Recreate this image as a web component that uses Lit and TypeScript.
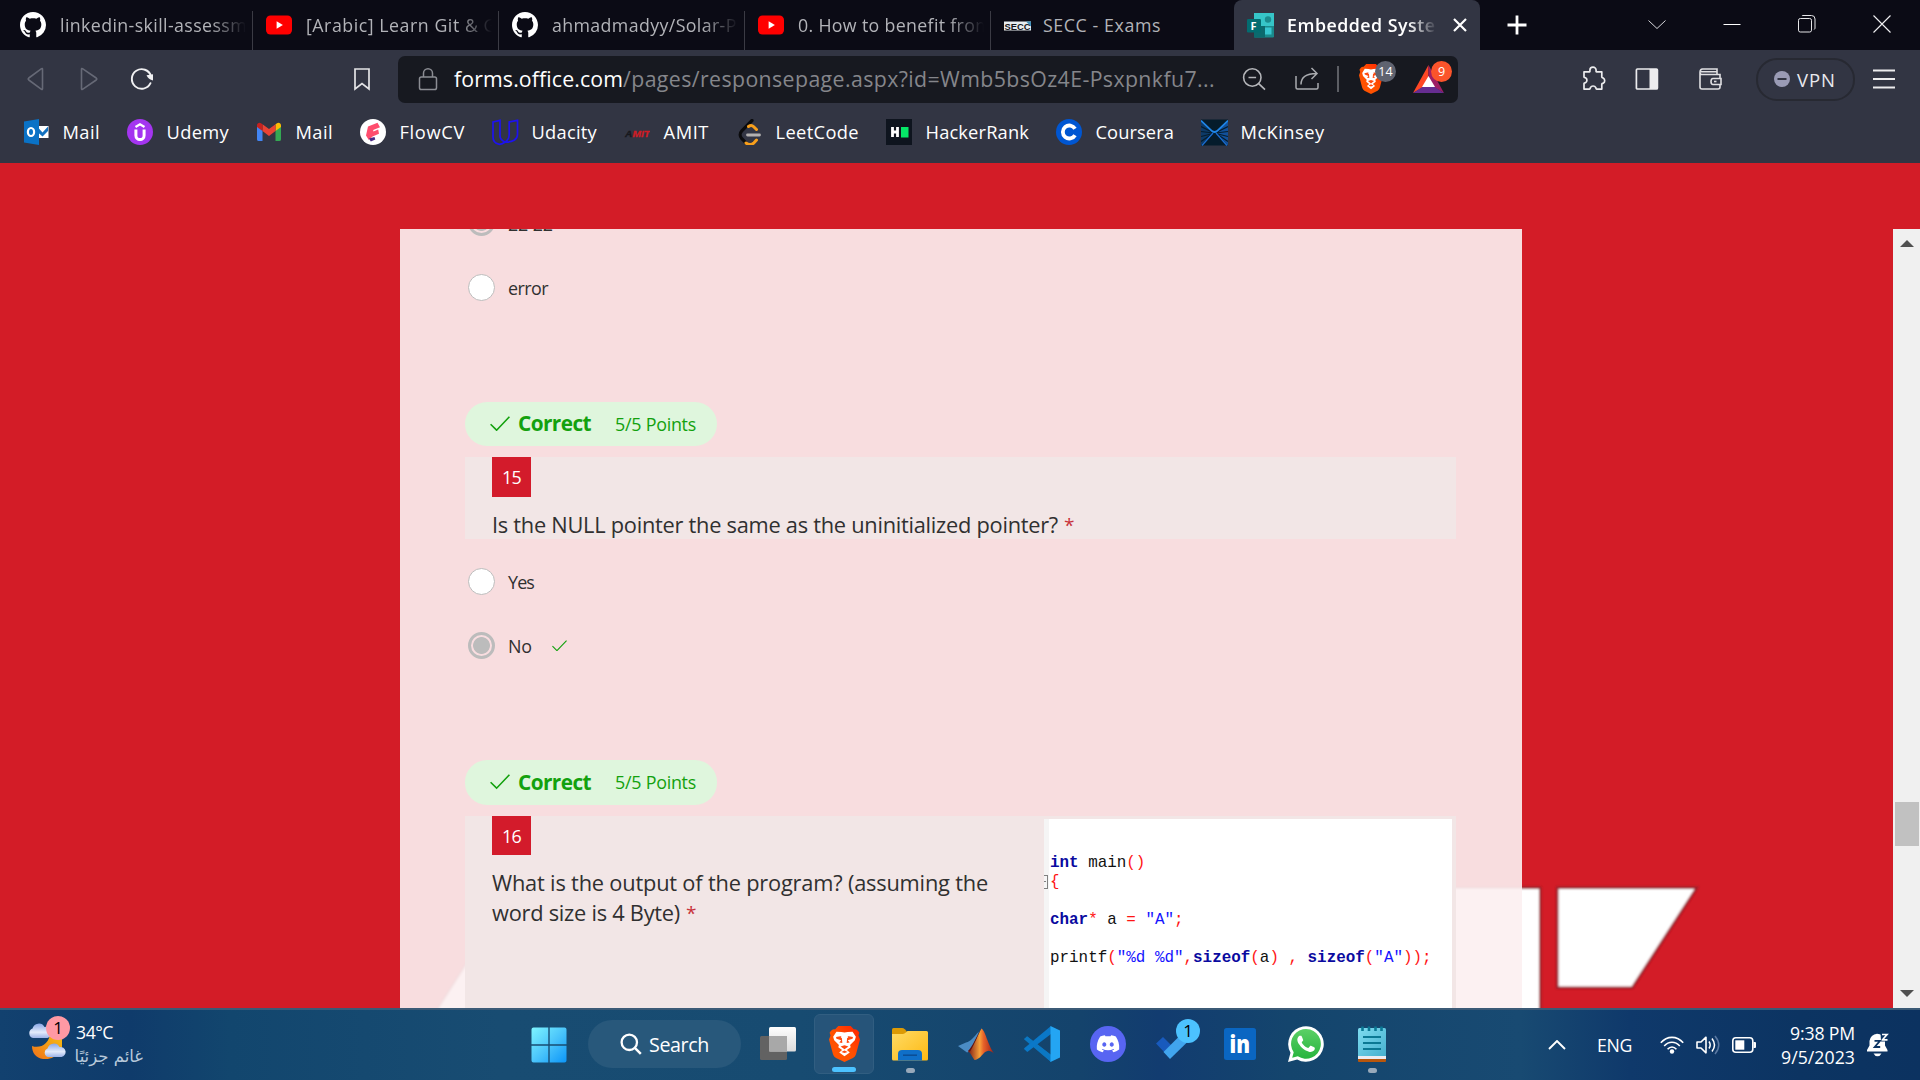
import { LitElement, html, svg, css, nothing } from "lit";
import { customElement, property } from "lit/decorators.js";

/** One line of text whose tracking is adjusted so that it spans exactly `w` pixels. */
@customElement("fit-text")
class FitText extends LitElement {
  @property() text = "";
  @property({ type: Number }) w = 0;

  static styles = css`
    :host { display: inline-block; flex: none; white-space: pre; }
    .line { display: inline-block; white-space: pre; }
  `;

  updated() {
    const line = this.renderRoot.querySelector(".line") as HTMLElement;
    line.style.letterSpacing = "0px";
    const natural = line.getBoundingClientRect().width;
    const spacing = (this.w - natural) / this.text.length;
    line.style.letterSpacing = `${spacing.toFixed(3)}px`;
    this.style.width = `${this.w}px`;
  }

  render() {
    return html`<span class="line">${this.text}</span>`;
  }
}

const fit = (text: string, w: number) => html`<fit-text .text=${text} .w=${w}></fit-text>`;

const icon = (size: number, box: string, body: unknown) =>
  html`<svg class="ic" width=${size} height=${size} viewBox=${box} fill="none">${body}</svg>`;

/* ---------- logos ---------- */

const github = icon(26, "0 0 16 16", svg`<path fill="#fff" d="M8 0C3.58 0 0 3.58 0 8c0 3.54 2.29 6.53 5.47 7.59.4.07.55-.17.55-.38 0-.19-.01-.82-.01-1.49-2.01.37-2.53-.49-2.69-.94-.09-.23-.48-.94-.82-1.13-.28-.15-.68-.52-.01-.53.63-.01 1.08.58 1.23.82.72 1.21 1.87.87 2.33.66.07-.52.28-.87.51-1.07-1.78-.2-3.64-.89-3.64-3.95 0-.87.31-1.59.82-2.15-.08-.2-.36-1.02.08-2.12 0 0 .67-.21 2.2.82.64-.18 1.32-.27 2-.27s1.36.09 2 .27c1.53-1.04 2.2-.82 2.2-.82.44 1.1.16 1.92.08 2.12.51.56.82 1.27.82 2.15 0 3.07-1.87 3.75-3.65 3.95.29.25.54.73.54 1.48 0 1.07-.01 1.93-.01 2.2 0 .21.15.46.55.38A8.01 8.01 0 0 0 16 8c0-4.42-3.58-8-8-8z"/>`);

const youtube = icon(26, "0 0 26 26", svg`
  <rect x="0" y="3.5" width="26" height="19" rx="4.5" fill="#f00"/>
  <path d="M10.6 9.2v7.6l6.3-3.8z" fill="#fff"/>`);

const secc = icon(27, "0 0 27 26", svg`
  <rect x="0" y="9" width="27" height="9" fill="#e8edf0"/>
  <path d="M22 9h5v5z" fill="#3f8fb8"/>
  <text x="0.5" y="17" font-family="Liberation Sans" font-weight="700" font-size="9.5" textLength="26" lengthAdjust="spacingAndGlyphs" fill="#15171c">SECC</text>`);

const forms = icon(27, "0 0 27 26", svg`
  <rect x="7" y="0.5" width="20" height="24.5" rx="1.2" fill="#1a8a8c"/>
  <rect x="7" y="0.5" width="20" height="13" fill="#36c5c8"/>
  <circle cx="21" cy="7" r="3.2" fill="#1b8c8f"/>
  <rect x="7" y="13.5" width="11" height="11.5" fill="#0b6a6e"/>
  <rect x="18" y="15" width="6.5" height="7" fill="#37c6d0"/>
  <rect x="0" y="6.5" width="14" height="13.5" rx="1.2" fill="#036c70"/>
  <text x="3.6" y="17.4" font-family="Open Sans" font-weight="700" font-size="11" fill="#fff">F</text>`);

const outlook = icon(26, "0 0 26 26", svg`
  <rect x="13" y="7" width="12.5" height="12" fill="#fff"/>
  <path d="M15 8.5l4.5 5 5.5-6v4.5l-5.5 5.5-4.5-4z" fill="#1170bf"/>
  <path d="M1 2.5L16 0v26L1 23.5z" fill="#0a72c6"/>
  <ellipse cx="8" cy="13" rx="3.1" ry="4" stroke="#fff" stroke-width="2.2"/>`);

const udemy = icon(26, "0 0 26 26", svg`
  <circle cx="13" cy="13" r="13" fill="#a435f0"/>
  <path d="M8.5 8L13 5.2 17.5 8" stroke="#fff" stroke-width="2.2"/>
  <path d="M8.9 10.5v6a4.1 4.1 0 0 0 8.2 0v-6" stroke="#fff" stroke-width="3"/>`);

const gmail = icon(26, "0 0 26 26", svg`
  <path d="M1 7v13.5A1.7 1.7 0 0 0 2.700 22H6.500V11z" fill="#4285f4"/>
  <path d="M25 7v13.500A1.700 1.700 0 0 1 23.300 22H19.500V11z" fill="#34a853"/>
  <path d="M19.500 5.200V12L25 8V6.500c0-2.400-2.500-3.400-4.300-2.100z" fill="#fbbc04"/>
  <path d="M6.500 12V5.200L13 10l6.500-4.800V12L13 17z" fill="#ea4335"/>
  <path d="M1 6.500V8l5.500 4V5.200L5.300 4.400C3.500 3.100 1 4.100 1 6.500z" fill="#c5221f"/>`);

const flowcv = icon(26, "0 0 26 26", svg`
  <circle cx="13" cy="13" r="13" fill="#fff"/>
  <path d="M8 7.500L17.500 3.800 20 8.200 13.200 11l.2 1.400 4.800-1.900.8 4.300L12.500 17.500 8.800 21 6 16.500z" fill="#ff4d6d"/>
  <path d="M9 19.500L14.500 18 15.300 20.500 10.800 22.500z" fill="#4b2a86"/>`);

const udacity = icon(27, "0 0 27 26", svg`
  <path d="M1 2.500L8 .8v15.500c0 3 1.500 5 5.200 6.200-2 1.500-4.200 2.600-6.400 2.200C3 24 1 21 1 17.500z" stroke="#1d12f0" stroke-width="1.700"/>
  <path d="M13.200 22.500c2.400-1.600 4-4.200 4-7.500V2.500L25.500.8v14.500c0 4.500-5 7.700-12.300 7.200z" stroke="#1d12f0" stroke-width="1.700"/>`);

const amit = icon(26, "0 0 26 26", svg`
  <text x="1" y="17.500" font-family="Liberation Sans" font-style="italic" font-weight="700" font-size="9.500" textLength="25" lengthAdjust="spacingAndGlyphs" fill="#d01c25" stroke="#d01c25" stroke-width=".3"><tspan fill="#17181d" stroke="#17181d">A</tspan>MIT</text>`);

const leetcode = icon(26, "0 0 26 26", svg`
  <path d="M16 1.500L5.800 11.800c-2.200 2.300-2.200 5.500 0 7.800L10 24" stroke="#0b0b0d" stroke-width="3.200" stroke-linecap="round"/>
  <path d="M12.500 7.500c2-1.500 3.800-1.200 5.200.2L20.500 10.500M10 24c2.500 2 6 1.800 8-.2L20.500 21" stroke="#f89f1b" stroke-width="3" stroke-linecap="round"/>
  <path d="M11.500 16h12" stroke="#b3b1b0" stroke-width="2.800" stroke-linecap="round"/>`);

const hackerrank = icon(26, "0 0 26 26", svg`
  <rect width="26" height="26" fill="#0e141e"/>
  <path d="M6.500 8v10M11.500 8v10M6.500 13h5" stroke="#fff" stroke-width="2.800"/>
  <rect x="15" y="8" width="7.500" height="10.500" fill="#05e767"/>`);

const coursera = icon(26, "0 0 26 26", svg`
  <circle cx="13" cy="13" r="13" fill="#0056d2"/>
  <path d="M19 9.800A6.500 6.500 0 1 0 19 16.200" stroke="#fff" stroke-width="3.800"/>`);

const mckinsey = icon(27, "0 0 27 26", svg`
  <rect width="27" height="26" fill="#051c2c"/>
  <path d="M0 1L12 12.500 0 26z" fill="#0d3a68"/><path d="M27 1L15 12.500 27 26z" fill="#12509a"/>
  <path d="M0 7l12 6M0 12l12 1.500M0 17l12-3M0 22l12-8M27 7l-12 6M27 12l-12 1.500M27 17l-12-3M27 22l-12-8" stroke="#051c2c" stroke-width="1.200"/>
  <path d="M0 1l11 10.500q2.500 2 5 0L27 1" stroke="#1f86e8" stroke-width="1.700"/>
  <path d="M12 13.500L1 26M15 13.500L26 26" stroke="#1a6cd0" stroke-width="1.300"/>`);

const braveLion = (w: number, h: number, id: string) => html`
  <svg class="ic" width=${w} height=${h} viewBox="0 0 30 36" fill="none" preserveAspectRatio="none">
    <defs><linearGradient id=${id} x1="0" y1="1" x2="1" y2="0">
      <stop offset="0" stop-color="#ff5500"/><stop offset=".5" stop-color="#ff5000"/><stop offset="1" stop-color="#ff2000"/>
    </linearGradient></defs>
    <path fill="url(#${id})" d="M9 0h12l3.200 3.400c2.400-.5 3.600 1 5.200 3.400L28.500 9.500 30 13.500 26.200 28c-.6 2-1.600 3-3 4L15 36l-8.200-4c-1.400-1-2.400-2-3-4L0 13.500 1.500 9.500.6 6.800C2.200 4.400 3.400 2.900 5.800 3.400z"/>
    <path fill="#fff" d="M15 6.500l3-.4 4.800-.4 3.200 5-1 3.600-4.600 4.700.6 2.200L17.300 24l2.800 2.400L15 30.300l-5.100-3.900L12.700 24 9 21.200l.6-2.200L5 14.300l-1-3.600 3.200-5 4.800.4z"/>
    <path fill="#ff4a10" d="M6.800 11l5.400-1-1 .9 1.300 1.300.4 4.700L10 16.500l1.800-2.200-4.600-1.600zM23.200 11l-5.400-1 1 .9-1.300 1.300-.4 4.700 2.900-.4-1.800-2.200 4.600-1.600zM11.200 20.500L15 19.200l3.800 1.300L15 23.300zM12 26l3-1.600 3 1.600-3 1z"/>
  </svg>`;

const bat = html`<svg class="ic" width="31" height="28" viewBox="0 0 31 28">
  <path d="M15.500 0L0 28l15.500-9z" fill="#ff4724"/><path d="M15.500 0L31 28l-15.500-9z" fill="#9e1f63"/>
  <path d="M0 28h31L15.500 18z" fill="#662d91"/><path d="M15.500 11L9 22h13z" fill="#fff"/></svg>`;

/* ---------- line icons ---------- */

const back = icon(26, "0 0 26 26", svg`<path d="M19.500 3.200v19.600q0 1-1 .5L5.800 14q-1.200-1 0-2L18.500 2.700q1-.5 1 .5z" stroke="#666976" stroke-width="1.600"/>`);
const forward = icon(26, "0 0 26 26", svg`<path d="M5.500 3.200v19.600q0 1 1 .5L20.200 14q1.200-1 0-2L6.500 2.700q-1-.5-1 .5z" stroke="#666976" stroke-width="1.600"/>`);
const reload = icon(26, "0 0 26 26", svg`<path d="M21.500 17.200A9.800 9.800 0 1 1 22 10" stroke="#f0f0f2" stroke-width="1.900" stroke-linecap="round"/><path d="M17.500 9.200L24 8.300v6.200q-4.500-1-6.500-5.300z" fill="#f0f0f2"/>`);
const bookmark = icon(26, "0 0 26 26", svg`<path d="M6 3h14v20l-7-5.500L6 23z" stroke="#e3e3e6" stroke-width="1.700"/>`);
const lock = icon(26, "0 0 26 26", svg`<rect x="4.500" y="11" width="17" height="12.500" rx="1.800" stroke="#8b8d93" stroke-width="1.500"/><path d="M8.500 11V7.300a4.500 4.500 0 0 1 9 0V11" stroke="#8b8d93" stroke-width="1.500"/>`);
const zoomOut = icon(26, "0 0 26 26", svg`<circle cx="11.300" cy="11.500" r="8.700" stroke="#b4b5b9" stroke-width="1.600"/><path d="M7.500 11.500h7.600M17.700 17.700l6.300 6" stroke="#b4b5b9" stroke-width="1.700"/>`);
const share = icon(26, "0 0 26 26", svg`<path d="M2 10v11.500q0 1.500 1.500 1.500h19q1.500 0 1.500-1.500V17" stroke="#a9abaf" stroke-width="1.500"/><path d="M7 18.500C7 11 12 7.500 22.500 7.500M17.500 2l5.500 5.500-5.500 5.500" stroke="#a9abaf" stroke-width="1.500"/>`);
const puzzle = icon(26, "0 0 26 26", svg`<path d="M3 5.800h5.300c.9 0 .6-.9.600-1.600a3.100 3.100 0 0 1 6.200 0c0 .7-.3 1.600.6 1.600h5.100v5.300c0 .9.800.7 1.400.9a3.100 3.100 0 0 1 0 5.300c-.6.300-1.400 0-1.400.9v4.900h-5.200c-.7 0-.5-.8-.8-1.400a3 3 0 0 0-5.400 0c-.3.600-.1 1.400-.8 1.400H3v-5.600c0-.9.900-.6 1.500-.8a2.800 2.800 0 0 0 0-4.900c-.6-.2-1.500.1-1.500-.8z" stroke="#ececee" stroke-width="1.700" stroke-linejoin="round"/>`);
const sidebar = icon(26, "0 0 26 26", svg`<rect x="2.400" y="3" width="21" height="20" rx="1" stroke="#ececee" stroke-width="1.700"/><path d="M15.500 3h8v20h-8z" fill="#ececee"/>`);
const wallet = icon(26, "0 0 26 26", svg`<path d="M3 6.500v14.500q0 2 2 2h16q2 0 2-2V8.500H5q-2 0-2-2 0-3.500 2.500-3.500H20v5M4 5.700h16" stroke="#e0e0e3" stroke-width="1.600"/><path d="M24 12.500h-8q-2 0-2 3t2 3h8z" fill="#323543" stroke="#e0e0e3" stroke-width="1.600"/><path d="M17 15.500h2.500" stroke="#e0e0e3" stroke-width="1.600"/>`);
const menu = icon(26, "0 0 26 26", svg`<path d="M2 4.500h22M2 13h22M2 21.500h22" stroke="#ececee" stroke-width="1.800"/>`);
const plus = icon(20, "0 0 20 20", svg`<path d="M10 .5v19M.5 10h19" stroke="#fff" stroke-width="2.800"/>`);
const tabClose = icon(14, "0 0 14 14", svg`<path d="M1 1l12 12M13 1L1 13" stroke="#fff" stroke-width="2.200"/>`);
const winDown = icon(18, "0 0 18 18", svg`<path d="M.5 5.500L9 13.500l8.500-8" stroke="#d8d8dc" stroke-width="1"/>`);
const winMin = icon(18, "0 0 18 18", svg`<path d="M.5 9.500h17" stroke="#fff" stroke-width="1"/>`);
const winRestore = icon(18, "0 0 18 18", svg`<rect x=".5" y="3.500" width="13" height="13.500" rx="1.800" stroke="#e6e6e8"/><path d="M4 1q0-.5 1-.5h8.500q3.500 0 3.500 3.500v9q0 1-.8 1.500" stroke="#e6e6e8"/>`);
const winClose = icon(18, "0 0 18 18", svg`<path d="M.5.500l17 17M17.500.500L.5 17.500" stroke="#f0f0f2" stroke-width="1.100"/>`);

const check = (w: number, sw: number) => html`<svg class="ic" width=${w} height=${w * 0.76} viewBox="0 0 20 15.200" fill="none">
  <path d="M.6 8.200l6 6L19.400.800" stroke="#13a10e" stroke-width=${sw}/></svg>`;

/* ---------- taskbar icons ---------- */

const weather = html`<svg class="ic" width="38" height="44" viewBox="0 0 38 44">
  <defs>
    <linearGradient id="moon" x1="0" y1="1" x2="1" y2="0"><stop offset="0" stop-color="#f0701a"/><stop offset="1" stop-color="#f5c211"/></linearGradient>
    <linearGradient id="cloud" x1="0" y1="0" x2="0" y2="1"><stop offset="0" stop-color="#88a7e6"/><stop offset=".6" stop-color="#e3ebfb"/><stop offset="1" stop-color="#9db3e8"/></linearGradient>
  </defs>
  <path d="M4 31c8 3 18-2 18-14l12 2v14c-4 9-13 12-19 11C8 43 4 38 4 31z" fill="url(#moon)"/>
  <path d="M5 23a5 5 0 0 1-.5-9.500 6.500 6.500 0 0 1 12-1.500 5.500 5.500 0 0 1 3 11z" fill="url(#cloud)"/>
  <path d="M20 42a4.500 4.500 0 0 1-.5-8.500 6.500 6.500 0 0 1 12-1.500 5 5 0 0 1 2 10z" fill="url(#cloud)"/></svg>`;

const windows = html`<svg class="ic" width="36" height="36" viewBox="0 0 36 36">
  <defs><linearGradient id="win" gradientUnits="userSpaceOnUse" x1="0" y1="0" x2="36" y2="36"><stop offset="0" stop-color="#7ff6ff"/><stop offset=".5" stop-color="#4cc6fb"/><stop offset="1" stop-color="#0a94f8"/></linearGradient></defs>
  <path fill="url(#win)" d="M2.500.500H17.300V17.300H.5V2.500a2 2 0 0 1 2-2zM18.700.500H33.500a2 2 0 0 1 2 2V17.300H18.700zM.5 18.700H17.300V35.500H2.500a2 2 0 0 1-2-2zM18.700 18.700H35.500V33.500a2 2 0 0 1-2 2H18.700z"/></svg>`;

const search = html`<svg class="ic" width="22" height="22" viewBox="0 0 22 22" fill="none">
  <circle cx="9.300" cy="9.300" r="7.700" stroke="#fff" stroke-width="2.300"/><path d="M14.800 14.800l6 6" stroke="#fff" stroke-width="2.500"/></svg>`;

const taskView = html`<svg class="ic" width="36" height="36" viewBox="0 0 36 36">
  <defs><linearGradient id="tv" x1="0" y1="0" x2="0" y2="1"><stop offset="0" stop-color="#fdfdfd"/><stop offset="1" stop-color="#dcdcdc"/></linearGradient></defs>
  <rect x="0" y="10" width="27" height="24" rx="1.500" fill="#626262"/>
  <rect x="9" y="1" width="27" height="24.500" rx="1.500" fill="url(#tv)"/>
  <rect x="9" y="10" width="18" height="15.500" fill="#a8a8a8"/></svg>`;

const explorer = html`<svg class="ic" width="36" height="36" viewBox="0 0 36 36">
  <defs><linearGradient id="fold" x1="0" y1="0" x2="1" y2="1"><stop offset="0" stop-color="#ffdb65"/><stop offset="1" stop-color="#fdb913"/></linearGradient></defs>
  <path d="M0 8V3.500Q0 2 1.500 2H10q1.500 0 2.800 1.200L15 5.500V9H0z" fill="#dc9a05"/>
  <path d="M0 8h10.500q1.500 0 3-1.200L15.500 5H34.500Q36 5 36 6.500V33q0 1.500-1.500 1.500H1.500Q0 34.500 0 33z" fill="url(#fold)"/>
  <path d="M6 34.500V28q0-4 4-4H26q4 0 4 4v6.500z" fill="#0f6fc8"/><path d="M11 29.200h14" stroke="#0b4c94" stroke-width="1.500"/></svg>`;

const matlab = html`<svg class="ic" width="36" height="36" viewBox="0 0 36 36">
  <defs><linearGradient id="mat" x1="0" y1="0" x2="1" y2="0"><stop offset="0" stop-color="#7a1714"/><stop offset=".45" stop-color="#f7a13a"/><stop offset=".6" stop-color="#e6622a"/><stop offset="1" stop-color="#a01c14"/></linearGradient></defs>
  <path d="M0 20l8-3.500c5-1 8-6 13-11L13 25l-4 1.500z" fill="#4b8cc4"/>
  <path d="M10 25.500c5-3 8-14 13.500-23C27 4 30 19 36 27.500c-4-4-7-3.500-10-.5-3 3-5 6.500-9.500 7C14 31 13 27 10 25.500z" fill="url(#mat)"/>
  <path d="M23.500 2.500c-3 5-6.500 15-11.500 23l-2-.5c5-5 8-14 13.500-22.500z" fill="#611210"/></svg>`;

const vscode = html`<svg class="ic" width="36" height="36" viewBox="0 0 36 36">
  <path d="M0 13.300L3.300 10.500 27 29v7L.5 12z" fill="#0a6fb8"/><path d="M0 13.300l3-3 24 18.500V36z" fill="#0b77c2"/>
  <path d="M0 23L3.300 26 27 8V0L.5 22z" fill="#0a78c8"/>
  <path d="M26.500 0L36 4.500v27L26.500 36z" fill="#24a5f3"/></svg>`;

const discord = html`<svg class="ic" width="36" height="36" viewBox="0 0 36 36"><circle cx="18" cy="18" r="18" fill="#5865f2"/>
  <g transform="translate(6.800 6.500) scale(.935)"><path fill="#fff" d="M20.317 4.370a19.790 19.790 0 0 0-4.885-1.515.074.074 0 0 0-.079.037c-.211.375-.445.865-.608 1.250-1.845-.276-3.680-.276-5.487 0-.164-.393-.406-.874-.618-1.250a.077.077 0 0 0-.079-.037 19.736 19.736 0 0 0-4.885 1.515.070.070 0 0 0-.032.028C.533 9.046-.319 13.580.099 18.058a.082.082 0 0 0 .031.056c2.053 1.508 4.041 2.423 5.993 3.029a.078.078 0 0 0 .084-.028c.462-.630.873-1.295 1.226-1.994a.076.076 0 0 0-.042-.106c-.653-.248-1.274-.549-1.872-.892a.077.077 0 0 1-.008-.128c.126-.094.252-.192.372-.291a.074.074 0 0 1 .078-.010c3.928 1.793 8.180 1.793 12.061 0a.074.074 0 0 1 .079.009c.120.099.246.198.373.292a.077.077 0 0 1-.007.128 12.299 12.299 0 0 1-1.873.891.077.077 0 0 0-.041.107c.360.698.772 1.363 1.225 1.993a.076.076 0 0 0 .084.029c1.961-.607 3.950-1.522 6.002-3.029a.077.077 0 0 0 .031-.055c.5-5.177-.838-9.674-3.549-13.660a.061.061 0 0 0-.031-.029zM8.020 15.331c-1.183 0-2.157-1.086-2.157-2.419s.956-2.419 2.157-2.419c1.211 0 2.176 1.095 2.157 2.419 0 1.333-.956 2.419-2.157 2.419zm7.975 0c-1.183 0-2.157-1.086-2.157-2.419s.955-2.419 2.157-2.419c1.211 0 2.176 1.095 2.157 2.419 0 1.333-.946 2.419-2.157 2.419z"/></g></svg>`;

const todo = html`<svg class="ic" width="36" height="36" viewBox="0 0 36 36">
  <path d="M0 17.500L7 11l9.500 9.500-7 7z" fill="#185abd"/><path d="M7.500 26L28 5.500l7 7L14 33z" fill="#41a5ee"/></svg>`;

const linkedin = html`<svg class="ic" width="36" height="36" viewBox="0 0 36 36"><rect x="2" y="2" width="32" height="32" rx="2.500" fill="#0a66c2"/>
  <text x="7.500" y="27" font-family="Open Sans" font-weight="800" font-size="24" textLength="20.500" lengthAdjust="spacingAndGlyphs" fill="#fff">in</text></svg>`;

const whatsapp = html`<svg class="ic" width="36" height="36" viewBox="0 0 36 36">
  <defs><linearGradient id="wa" x1="0" y1="0" x2="0" y2="1"><stop offset="0" stop-color="#5bd066"/><stop offset="1" stop-color="#27b43e"/></linearGradient></defs>
  <path d="M0 36l2.500-9.200A17.800 17.800 0 1 1 9.200 33.500z" fill="#fff"/>
  <path d="M4.200 31.800l1.500-5.500A14.900 14.900 0 1 1 9.800 30.300z" fill="url(#wa)"/>
  <g transform="translate(.6 .4) scale(1.450)"><path fill="#fff" d="M17.472 14.382c-.297-.149-1.758-.867-2.030-.967-.273-.099-.471-.148-.670.150-.197.297-.767.966-.940 1.164-.173.199-.347.223-.644.075-.297-.150-1.255-.463-2.390-1.475-.883-.788-1.480-1.761-1.653-2.059-.173-.297-.018-.458.130-.606.134-.133.298-.347.446-.520.149-.174.198-.298.298-.497.099-.198.050-.371-.025-.520-.075-.149-.669-1.612-.916-2.207-.242-.579-.487-.5-.669-.510-.173-.008-.371-.010-.570-.010-.198 0-.520.074-.792.372-.272.297-1.040 1.016-1.040 2.479 0 1.462 1.065 2.875 1.213 3.074.149.198 2.096 3.200 5.077 4.487.709.306 1.262.489 1.694.625.712.227 1.360.195 1.871.118.571-.085 1.758-.719 2.006-1.413.248-.694.248-1.289.173-1.413-.074-.124-.272-.198-.570-.347"/></g></svg>`;

const notepad = html`<svg class="ic" width="36" height="36" viewBox="0 0 36 36">
  <defs><linearGradient id="np" x1="0" y1="0" x2="1" y2="1"><stop offset="0" stop-color="#7edcf0"/><stop offset="1" stop-color="#46b0cf"/></linearGradient></defs>
  <rect x="4" y="28" width="28" height="8" rx="1" fill="#b8560c"/><rect x="4" y="26" width="28" height="7" fill="#ececf2"/>
  <path d="M4 3.500Q4 2 5.500 2h25Q32 2 32 3.500V30H4z" fill="url(#np)"/>
  <path d="M9 11h18M9 17h18M9 23h18" stroke="#0b7894" stroke-width="1.900"/>
  <path d="M8.500.500v4.500M15 .500v4.500M21.500.500v4.500M27.500.500v4.500" stroke="#0b7894" stroke-width="2.600"/></svg>`;

const chevronUp = html`<svg class="ic" width="18" height="10" viewBox="0 0 18 10" fill="none"><path d="M1 9l8-8 8 8" stroke="#fff" stroke-width="1.900"/></svg>`;
const wifi = html`<svg class="ic" width="24" height="18" viewBox="0 0 24 18" fill="none">
  <path d="M.8 6.800C7-.400 17-.400 23.200 6.800M4.200 10c4.500-5 11-5 15.600 0M7.600 13.200c2.600-3 6.200-3 8.800 0" stroke="#fff" stroke-width="1.600"/><circle cx="12" cy="15.500" r="2.200" fill="#fff"/></svg>`;
const volume = html`<svg class="ic" width="24" height="20" viewBox="0 0 24 20" fill="none">
  <path d="M1 7v6h4l5 4.800V2.200L5 7z" stroke="#fff" stroke-width="1.600" stroke-linejoin="round"/><path d="M13 6.500q2.400 3.500 0 7M16 3.500q5 6.500 0 13" stroke="#fff" stroke-width="1.500"/><path d="M19 1q7.500 9 0 18" stroke="#5a79a3" stroke-width="1.500"/></svg>`;
const battery = html`<svg class="ic" width="24" height="16" viewBox="0 0 24 16" fill="none">
  <rect x=".8" y=".8" width="20" height="14.400" rx="3" stroke="#fff" stroke-width="1.600"/><rect x="3.300" y="3.300" width="9" height="9.400" fill="#fff"/><path d="M21.500 5h1.500q1 0 1 1v4q0 1-1 1h-1.500z" fill="#fff"/></svg>`;
const bell = html`<svg class="ic" width="22" height="24" viewBox="0 0 22 24" fill="none">
  <path d="M0 17l2.500-4.500V8A8 8 0 0 1 10 .800Q16 .800 18 7v5.500l2.500 4.500v1.500H0z" fill="#fff"/><path d="M6.500 20.500h8q-1.500 2.800-4 2.800t-4-2.800z" fill="#fff"/>
  <path d="M13.500 0H22v8.500h-8z" fill="#0d3564"/>
  <path d="M15 1.500h5L15.500 6.800H20.500" stroke="#fff" stroke-width="1.700"/><path d="M7.500 7.800h5.500l-5.300 6.200h5.500" stroke="#0d3564" stroke-width="1.800"/></svg>`;

/* ---------- data ---------- */

const tabs = [
  { logo: github, title: "linkedin-skill-assessm", w: 187 },
  { logo: youtube, title: "[Arabic] Learn Git & Gi", w: 196 },
  { logo: github, title: "ahmadmadyy/Solar-Pa", w: 195 },
  { logo: youtube, title: "0. How to benefit from", w: 194 },
  { logo: secc, title: "SECC - Exams", w: 118 },
];

const bookmarks = [
  { logo: outlook, name: "Mail", w: 37.5 },
  { logo: udemy, name: "Udemy", w: 62.5 },
  { logo: gmail, name: "Mail", w: 37.5 },
  { logo: flowcv, name: "FlowCV", w: 65.5 },
  { logo: udacity, name: "Udacity", w: 65.5 },
  { logo: amit, name: "AMIT", w: 45.5 },
  { logo: leetcode, name: "LeetCode", w: 83.5 },
  { logo: hackerrank, name: "HackerRank", w: 103.5 },
  { logo: coursera, name: "Coursera", w: 78.5 },
  { logo: mckinsey, name: "McKinsey", w: 84 },
];

const apps = [
  { logo: taskView },
  { logo: braveLion(31, 36, "lionBar"), active: true },
  { logo: explorer, open: true },
  { logo: matlab },
  { logo: vscode },
  { logo: discord },
  { logo: todo, count: "1" },
  { logo: linkedin },
  { logo: whatsapp },
  { logo: notepad, open: true },
] as { logo: unknown; active?: boolean; open?: boolean; count?: string }[];

type Token = [string, string];
const code: Token[][] = [
  [["k", "int"], ["", " main"], ["o", "()"]],
  [["o", "{"]],
  [],
  [["k", "char"], ["o", "*"], ["", " a "], ["o", "="], ["", " "], ["s", '"A"'], ["o", ";"]],
  [],
  [["", "printf"], ["o", "("], ["s", '"%d %d"'], ["o", ","], ["k", "sizeof"], ["o", "("], ["", "a"], ["o", ")"], ["", " "], ["o", ","], ["", " "], ["k", "sizeof"], ["o", "("], ["s", '"A"'], ["o", "));"]],
];

@customElement("app-root")
class AppRoot extends LitElement {
  static styles = css`
    :host { display: block; width: 1920px; height: 1080px; overflow: hidden; font-family: "Open Sans", "Noto Sans", sans-serif; }
    * { box-sizing: border-box; }
    .ic { display: block; flex: none; }
    .screen { display: flex; flex-direction: column; width: 1920px; height: 1080px; }

    .tabstrip { display: flex; height: 50px; background: #0b0b15; padding-left: 7px; color: #b2b3b8; font-size: 17.800px; }
    .tab { display: flex; align-items: center; width: 246px; height: 50px; padding-left: 13px; position: relative; }
    .tab .label { margin-left: 14px; width: 188px; overflow: hidden; line-height: 26px; display: flex; }
    .tab .label.fade { mask-image: linear-gradient(90deg, #000 80%, transparent 99%); }
    .tab::after { content: ""; position: absolute; right: 0; top: 11px; width: 1px; height: 39px; background: #3b3b44; }
    .tab.last::after { display: none; }
    .tab.last .label { margin-left: 12px; }
    .tab.active { background: #323543; border-radius: 8px 8px 0 0; color: #fff; margin-left: -3px; font-weight: 600; }
    .tab.active::after { display: none; }
    .tab.active .label { width: 152px; margin-left: 13px; }
    .tab.active .x { margin-left: 14px; }
    .newtab { display: flex; align-items: center; margin-left: 27px; }
    .winctl { display: flex; align-items: center; gap: 57px; margin-left: auto; padding: 0 29px 2px 0; }

    .toolbar { display: flex; align-items: center; height: 60px; background: #323543; padding: 0 0 2px 23px; }
    .nav { display: flex; gap: 27px; width: 326px; }
    .mark { width: 49px; }
    .address { display: flex; align-items: center; width: 1060px; height: 47px; border-radius: 7px; background: #171920; margin-top: 1px; padding: 0 0 2px 17px; font-size: 21.300px; }
    .url { display: flex; margin-left: 13px; width: 787px; line-height: 28px; color: #85868b; }
    .host { color: #fff; }
    .sep { width: 2px; height: 26px; background: #5c5e64; margin: 0 20px 0 17px; }
    .shareic { margin-left: 27px; }
    .shield, .rewards { position: relative; }
    .rewards { margin-left: 30px; }
    .dot { position: absolute; width: 21px; height: 21px; border-radius: 50%; font-size: 12.5px; line-height: 21px; text-align: center; color: #fff; }
    .shield .dot { background: #5f6370; left: 16px; top: -3px; }
    .rewards .dot { background: #fb542b; left: 18px; top: -4px; }
    .tools { display: flex; align-items: center; margin-left: 123px; }
    .gap27 { margin-left: 27px; }
    .gap37 { margin-left: 37px; }
    .vpn { display: flex; align-items: center; gap: 7px; width: 99px; height: 43px; margin: 0 16px 0 33px; border: 2px solid #272932; border-radius: 21px; padding-left: 16px; color: #e9e9ee; font-size: 18.500px; }

    .bookmarks { display: flex; align-items: center; height: 53px; background: #323543; padding: 0 0 9px 23px; gap: 27px; color: #fff; font-size: 18.300px; }
    .bm { display: flex; align-items: center; }
    .bm .name { display: flex; margin-left: 13.5px; line-height: 26px; }
    .bm .logo { width: 26px; }

    .page { position: relative; display: flex; justify-content: flex-end; height: 845px; background: #d31c27; overflow: hidden; padding-top: 66px; }
    .backdrop { position: absolute; left: 0; top: 0; }
    .card { position: relative; width: 1122px; height: 779px; margin-right: 371px; background: rgba(252, 240, 241, 0.912); overflow: hidden; padding-left: 65px; color: #303030; font-size: 17.900px; }
    .scroll { position: relative; width: 27px; height: 779px; background: #f0f0f0; display: flex; flex-direction: column; justify-content: space-between; align-items: center; padding: 11px 0 11px; }
    .thumb { position: absolute; left: 2px; top: 573px; width: 24px; height: 44px; background: #c1c1c1; }

    .option { display: flex; align-items: center; height: 28px; padding-left: 3px; line-height: 28px; }
    .radio { display: block; width: 27px; height: 27px; flex: none; border-radius: 50%; border: 1.500px solid #bdbdbd; background: #fff; }
    .radio.on { border: 3.500px solid #bcbcbc; background: radial-gradient(circle, #bcbcbc 8px, #f9dde0 8.800px); }
    .option .name { display: flex; margin: 1px 20px 0 13px; }
    .first { margin-top: -21px; }
    .first .name { padding-top: 3px; }
    .second { margin-top: 37px; }
    .yes { margin-top: 28px; }
    .no { margin-top: 36.500px; }
    .verdict { display: flex; align-items: center; width: 252px; height: 44px; border-radius: 22px; background: #dff6dd; padding: 0 0 1px 25px; color: #13a10e; }
    .verdict b { display: flex; margin: 0 24px 0 8px; font-size: 20.800px; line-height: 43px; }
    .v15 { margin-top: 101px; }
    .v16 { margin-top: 100.500px; height: 45px; }
    .question { display: flex; justify-content: space-between; width: 991px; margin-top: 11px; background: #f2e6e6; padding-left: 27px; }
    .q15 { height: 82px; overflow: hidden; }
    .q16 { height: 240px; }
    .num { display: flex; align-items: center; justify-content: center; width: 39px; height: 40px; background: #d31b2b; color: #fff; font-size: 17.900px; }
    .q16 .num { height: 39px; }
    .ask { font-size: 21.800px; line-height: 30px; margin-top: 13px; }
    .line { display: flex; }
    .star { color: #c8323a; margin-left: 6px; font-size: 19px; }
    .shot { width: 408px; height: 220px; margin: 3px 4px 0 0; background: #fff; border-left: 5px solid #f5f5f5; padding: 35px 0 0 1px; font: 15.900px/19px "Liberation Mono", monospace; color: #111; position: relative; }
    .codeline { height: 19px; white-space: pre; }
    .k { color: #0a0aa0; font-weight: 700; }
    .o { color: #ff1414; }
    .s { color: #1414ff; }
    .fold { position: absolute; left: -5px; top: 56px; width: 4px; height: 14px; border: 1px solid #808080; border-left: 0; background: linear-gradient(#808080, #808080) 0 5px / 2px 1px no-repeat; }

    .taskbar { display: flex; height: 72px; border-top: 2px solid #3b5a76; position: relative; color: #fff; font-size: 17.700px;
      background: linear-gradient(90deg, #12416f 0, #0f3b6b 130px, #12466e 230px, #184c72 500px, #174b71 800px, #14436c 1080px, #123c70 1160px, #14456d 1290px, #184a72 1520px, #0f396b 1630px, #0c3462 1800px, #0c3260 1920px); }
    .weather { display: flex; width: 531px; padding: 5px 0 0 28px; }
    .wicon { position: relative; height: 44px; }
    .badge { position: absolute; border-radius: 50%; width: 24px; height: 24px; line-height: 23px; text-align: center; font-size: 17px; color: #000; }
    .wicon .badge { background: #ff99a4; left: 18px; top: 1px; }
    .wtext { margin-left: 10px; padding-top: 5px; line-height: 24px; }
    .arabic { direction: rtl; width: 67px; color: #b9cadb; font: 16.500px/25px "DejaVu Sans", sans-serif; white-space: nowrap; }
    .start { display: flex; align-items: center; width: 57px; }
    .search { display: flex; align-items: center; width: 153px; height: 48px; margin: 10px 4px 0 0; border-radius: 24px; background: #28587b; padding-left: 32px; font-size: 19.700px; }
    .search span { display: flex; margin-left: 7px; }
    .app { position: relative; display: flex; align-items: center; justify-content: center; width: 60px; height: 60px; margin: 4px 3px; border-radius: 6px; }
    .app.active { background: #265479; border: 1px solid #315e81; }
    .bar { position: absolute; bottom: 1px; height: 5px; border-radius: 3px; background: #4cc2ff; width: 24px; }
    .app.open .bar { width: 9px; background: #98a9ba; }
    .app .badge { background: #4cc2ff; left: 32px; top: 5px; }
    .tray { display: flex; align-items: center; margin-left: auto; padding: 0 31px 1px 0; }
    .tray .lang { display: flex; margin: 0 28px 0 31px; }
    .tray .net { display: flex; align-items: center; gap: 12px; }
    .clock { display: flex; flex-direction: column; align-items: flex-end; line-height: 24px; width: 99px; margin-right: 12px; }
  `;

  private tab(t: (typeof tabs)[number], i: number) {
    const last = i === tabs.length - 1;
    return html`<div class="tab ${last ? "last" : ""}">${t.logo}<div class="label ${last ? "" : "fade"}">${fit(t.title, t.w)}</div></div>`;
  }

  private chrome() {
    return html`
      <div class="tabstrip">
        ${tabs.map((t, i) => this.tab(t, i))}
        <div class="tab active">${forms}<div class="label fade">${fit("Embedded System", 166)}</div><span class="x">${tabClose}</span></div>
        <div class="newtab">${plus}</div>
        <div class="winctl">${winDown}${winMin}${winRestore}${winClose}</div>
      </div>
      <div class="toolbar">
        <div class="nav">${back}${forward}${reload}</div>
        <div class="mark">${bookmark}</div>
        <div class="address">
          ${lock}
          <div class="url"><span class="host">${fit("forms.office.com", 169)}</span>${fit("/pages/responsepage.aspx?id=Wmb5bsOz4E-Psxpnkfu7...", 592)}</div>
          ${zoomOut}<span class="shareic">${share}</span><span class="sep"></span>
          <span class="shield">${braveLion(24, 30, "lionTop")}<span class="dot">14</span></span>
          <span class="rewards">${bat}<span class="dot">9</span></span>
        </div>
        <div class="tools">
          ${puzzle}<span class="gap27">${sidebar}</span><span class="gap37">${wallet}</span>
          <div class="vpn">${icon(16, "0 0 16 16", svg`<circle cx="8" cy="8" r="8" fill="#9a9bb5"/><path d="M3.500 8h9" stroke="#323543" stroke-width="2"/>`)}${fit("VPN", 39)}</div>
          ${menu}
        </div>
      </div>
      <div class="bookmarks">
        ${bookmarks.map((b) => html`<div class="bm"><span class="logo">${b.logo}</span><span class="name">${fit(b.name, b.w)}</span></div>`)}
      </div>`;
  }

  private option(cls: string, text: string, w: number, on = false, right = false) {
    return html`<div class="option ${cls}"><span class="radio ${on ? "on" : ""}"></span><span class="name">${fit(text, w)}</span>${right ? check(15, 1.5) : nothing}</div>`;
  }

  private verdict(cls: string) {
    return html`<div class="verdict ${cls}">${check(20, 1.6)}<b>${fit("Correct", 73)}</b>${fit("5/5 Points", 81)}</div>`;
  }

  private page() {
    return html`<div class="page">
      <svg class="backdrop" width="1893" height="845" viewBox="0 163 1893 845">
        <defs><filter id="soft"><feGaussianBlur stdDeviation=".9"/></filter></defs>
        <g filter="url(#soft)">
          <g stroke="#9c1f2b" stroke-width="5" stroke-linejoin="miter">
            <path d="M1558.500 889H1694.500L1631.500 986.500H1558.500z"/>
            <path d="M1539 1020V889H515L432 1020z"/>
          </g>
          <g fill="#fff"><path d="M1558.500 889H1694.500L1631.500 986.500H1558.500z"/><path d="M1539 1020V889H515L432 1020z"/></g>
        </g>
      </svg>
      <div class="card">
        ${this.option("first", "22 22", 45, true)}
        ${this.option("second", "error", 40)}
        ${this.verdict("v15")}
        <div class="question q15">
          <div><div class="num">${fit("15", 19)}</div>
            <div class="ask"><div class="line">${fit("Is the NULL pointer the same as the uninitialized pointer?", 566)}<span class="star">*</span></div></div></div>
        </div>
        ${this.option("yes", "Yes", 26)}
        ${this.option("no", "No", 24, true, true)}
        ${this.verdict("v16")}
        <div class="question q16">
          <div><div class="num">${fit("16", 19)}</div>
            <div class="ask">
              <div class="line">${fit("What is the output of the program? (assuming the", 496)}</div>
              <div class="line">${fit("word size is 4 Byte)", 188)}<span class="star">*</span></div>
            </div></div>
          <div class="shot"><span class="fold"></span>
            ${code.map((l) => html`<div class="codeline">${l.map(([c, t]) => html`<span class=${c}>${t}</span>`)}</div>`)}
          </div>
        </div>
      </div>
      <div class="scroll">
        <svg class="ic" width="14" height="7" viewBox="0 0 14 7"><path d="M0 7l7-7 7 7z" fill="#505050"/></svg>
        <span class="thumb"></span>
        <svg class="ic" width="14" height="7" viewBox="0 0 14 7"><path d="M0 0l7 7 7-7z" fill="#505050"/></svg>
      </div>
    </div>`;
  }

  private taskbar() {
    return html`<div class="taskbar">
      <div class="weather">
        <div class="wicon">${weather}<span class="badge">1</span></div>
        <div class="wtext">${fit("34°C", 37)}<div class="arabic">غائم جزئيًا</div></div>
      </div>
      <div class="start">${windows}</div>
      <div class="search">${search}<span>${fit("Search", 60)}</span></div>
      ${apps.map((a) => html`<div class="app ${a.active ? "active" : a.open ? "open" : ""}">${a.logo}
        ${a.active || a.open ? html`<span class="bar"></span>` : nothing}
        ${a.count ? html`<span class="badge">${a.count}</span>` : nothing}</div>`)}
      <div class="tray">
        ${chevronUp}<span class="lang">${fit("ENG", 35)}</span>
        <span class="net">${wifi}${volume}${battery}</span>
        <div class="clock">${fit("9:38 PM", 65)}${fit("9/5/2023", 74)}</div>
        ${bell}
      </div>
    </div>`;
  }

  render() {
    return html`<div class="screen">${this.chrome()}${this.page()}${this.taskbar()}</div>`;
  }
}
